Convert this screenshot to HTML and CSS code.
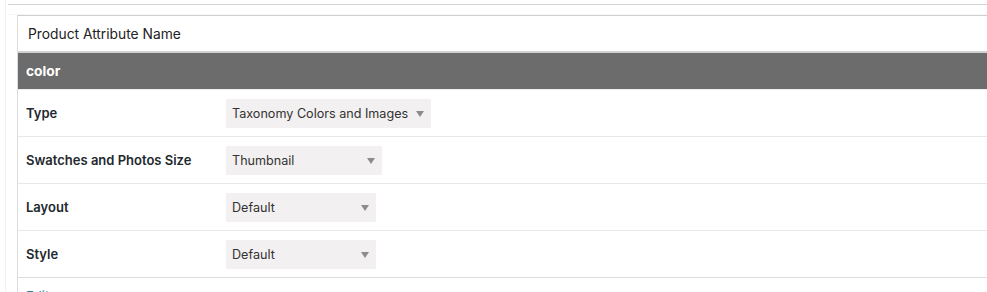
FILE: index.html
```html
<!DOCTYPE html>
<html lang="en">
<head>
    <meta charset="UTF-8">
    <title>Product Attributes</title>
    <link rel="stylesheet" href="styles.css">
</head>
<body>
    <div class="page">
        <div class="topline"></div>
        <div class="attr-box">
            <div class="attr-title">Product Attribute Name</div>
            <div class="attr-name">color</div>
            <table class="attr-table">
                <tr>
                    <th>Type</th>
                    <td><div class="select select-type">Taxonomy Colors and Images</div></td>
                </tr>
                <tr>
                    <th>Swatches and Photos Size</th>
                    <td><div class="select select-size">Thumbnail</div></td>
                </tr>
                <tr>
                    <th>Layout</th>
                    <td><div class="select select-small">Default</div></td>
                </tr>
                <tr>
                    <th>Style</th>
                    <td><div class="select select-small">Default</div></td>
                </tr>
            </table>
            <div class="attr-foot"><a href="#">Edit</a></div>
        </div>
    </div>
</body>
</html>
```

FILE: styles.css
```css
body {
    margin: 0;
    padding: 0;
    background-color: #fff;
    font-family: Inter, "Noto Sans", sans-serif;
    font-size: 13px;
    color: #1d2327;
    overflow: hidden;
}
.page {
    margin-left: 5px;
    border-left: 1px solid #f1f1f1;
    padding-top: 4px;
    height: 292px;
}
.topline {
    margin-left: 2px;
    border-top: 1px solid #d4d4d4;
    height: 9px;
    border-bottom: 1px solid #f6f6f6;
}
.attr-box {
    margin-left: 11px;
    width: 1000px;
    border-top: 1px solid #cfcfcf;
    border-left: 1px solid #dcdcdc;
}
.attr-title {
    height: 35px;
    line-height: 36px;
    padding-left: 10px;
    font-size: 13.8px;
    border-bottom: 2px solid #d2d2d2;
    color: #222;
}
.attr-name {
    background-color: #6c6c6c;
    color: #fff;
    font-weight: 700;
    font-size: 13.8px;
    height: 36px;
    line-height: 36px;
    padding-left: 8px;
}
.attr-table {
    width: 100%;
    border-collapse: collapse;
    border-top: 1px solid #ededed;
}
.attr-table tr {
    height: 47px;
    border-bottom: 1px solid #e8e8e8;
}
.attr-table tr:last-child {
    border-bottom: 1px solid #dcdcdc;
}
.attr-table th {
    width: 200px;
    text-align: left;
    font-weight: 600;
    font-size: 13px;
    padding: 0 0 1px 8px;
    color: #23282d;
}
.attr-table td {
    padding: 0;
}
.select {
    position: relative;
    height: 29px;
    line-height: 30px;
    background-color: #f2f0f0;
    padding-left: 6px;
    color: #333;
    font-size: 12.6px;
    box-sizing: border-box;
    border-radius: 1px;
}
.select::after {
    content: "";
    position: absolute;
    right: 7px;
    top: 12px;
    border-left: 4px solid transparent;
    border-right: 4px solid transparent;
    border-top: 6px solid #8c8c8c;
}
.select-type {
    width: 205px;
}
.select-size {
    width: 156px;
}
.select-small {
    width: 150px;
}
.attr-foot {
    padding: 10px 0 0 8px;
}
.attr-foot a {
    color: #2a7ea0;
    text-decoration: none;
}
```
